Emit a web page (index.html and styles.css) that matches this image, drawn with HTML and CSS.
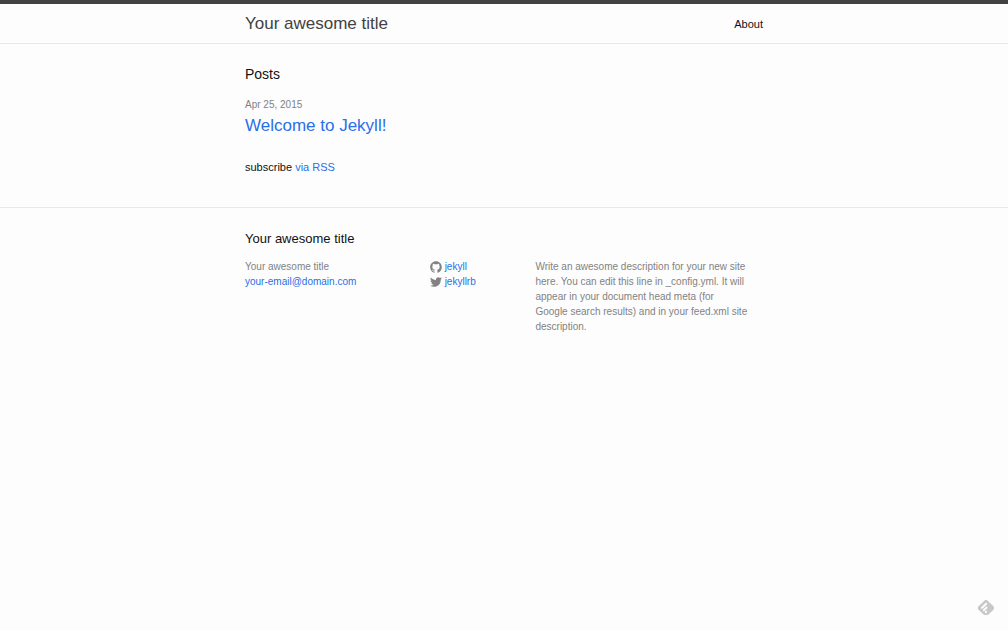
FILE: index.html
```html
<!DOCTYPE html>
<html lang="en">
<head>
<meta charset="utf-8">
<meta name="viewport" content="width=device-width, initial-scale=1">
<title>Your awesome title</title>
<link rel="stylesheet" href="styles.css">
</head>
<body>
<header class="site-header">
  <div class="wrapper header-row">
    <a class="site-title" href="#">Your awesome title</a>
    <nav class="site-nav"><a href="#">About</a></nav>
  </div>
</header>
<main class="page-content">
  <div class="wrapper">
    <h1 class="page-heading">Posts</h1>
    <ul class="post-list">
      <li>
        <time class="post-meta" datetime="2015-04-25">Apr 25, 2015</time>
        <h2 class="post-title"><a href="#">Welcome to Jekyll!</a></h2>
      </li>
    </ul>
    <p class="rss-subscribe">subscribe <a href="#">via RSS</a></p>
  </div>
</main>
<footer class="site-footer">
  <div class="wrapper">
    <h2 class="footer-heading">Your awesome title</h2>
    <div class="footer-columns">
      <ul class="contact-list">
        <li>Your awesome title</li>
        <li><a href="mailto:your-email@domain.com">your-email@domain.com</a></li>
      </ul>
      <ul class="social-list">
        <li><a href="#"><svg class="icon" viewBox="0 0 16 16" aria-hidden="true"><path d="M7.999,0.431c-4.285,0-7.76,3.474-7.76,7.761 c0,3.428,2.223,6.337,5.307,7.363c0.388,0.071,0.53-0.168,0.53-0.374c0-0.184-0.007-0.672-0.01-1.32 c-2.159,0.469-2.614-1.04-2.614-1.04c-0.353-0.896-0.862-1.135-0.862-1.135c-0.705-0.481,0.053-0.472,0.053-0.472 c0.779,0.055,1.189,0.8,1.189,0.8c0.692,1.186,1.816,0.843,2.258,0.645c0.071-0.502,0.271-0.843,0.493-1.037 C4.86,11.425,3.049,10.76,3.049,7.786c0-0.847,0.302-1.54,0.799-2.082C3.768,5.507,3.501,4.718,3.924,3.65 c0,0,0.652-0.209,2.134,0.796C6.677,4.273,7.34,4.187,8,4.184c0.659,0.003,1.323,0.089,1.943,0.261 c1.482-1.004,2.132-0.796,2.132-0.796c0.423,1.068,0.157,1.857,0.077,2.054c0.497,0.542,0.798,1.235,0.798,2.082 c0,2.981-1.814,3.637-3.543,3.829c0.279,0.24,0.527,0.713,0.527,1.437c0,1.037-0.01,1.874-0.01,2.129 c0,0.208,0.14,0.449,0.534,0.373c3.081-1.028,5.302-3.935,5.302-7.362C15.76,3.906,12.285,0.431,7.999,0.431z"/></svg>jekyll</a></li>
        <li><a href="#"><svg class="icon" viewBox="0 0 16 16" aria-hidden="true"><path d="M15.969,3.058c-0.586,0.26-1.217,0.436-1.878,0.515c0.675-0.405,1.194-1.045,1.438-1.809c-0.632,0.375-1.332,0.647-2.076,0.793c-0.596-0.636-1.446-1.033-2.387-1.033c-1.806,0-3.27,1.464-3.27,3.27 c0,0.256,0.029,0.506,0.085,0.745C5.163,5.404,2.753,4.102,1.14,2.124C0.859,2.607,0.698,3.168,0.698,3.767 c0,1.134,0.577,2.135,1.455,2.722C1.616,6.472,1.112,6.325,0.671,6.08c0,0.014,0,0.027,0,0.041c0,1.584,1.127,2.906,2.623,3.206 C3.02,9.402,2.731,9.442,2.433,9.442c-0.211,0-0.416-0.021-0.615-0.059c0.416,1.299,1.624,2.245,3.055,2.271 c-1.119,0.877-2.529,1.4-4.061,1.4c-0.264,0-0.524-0.015-0.78-0.046c1.447,0.928,3.166,1.469,5.013,1.469 c6.015,0,9.304-4.983,9.304-9.304c0-0.142-0.003-0.283-0.009-0.423C14.976,4.29,15.531,3.714,15.969,3.058z"/></svg>jekyllrb</a></li>
      </ul>
      <p class="description">Write an awesome description for your new site here. You can edit this line in _config.yml. It will appear in your document head meta (for<br>Google search results) and in your feed.xml site description.</p>
    </div>
  </div>
</footer>
<button class="feed-button" type="button" aria-label="Subscribe to feed">
  <svg viewBox="0 0 18 18" aria-hidden="true"><path class="feed-shape" d="M7.6 1.4Q9 .2 10.4 1.4L16.7 7.6Q18 9 16.7 10.4L12 15.1Q11.2 16 10 16H8Q6.8 16 6 15.1L1.3 10.4Q0 9 1.3 7.6Z"/><path class="feed-line" d="M5 8.9L9.2 4.7M6.9 11.2L9.5 8.6M8.8 13.1L9.1 12.8"/></svg>
</button>
</body>
</html>
```
FILE: styles.css
```css
* {
  box-sizing: border-box;
  margin: 0;
  padding: 0;
}

body {
  background: #fdfdfd;
  color: #111;
  font: 300 11px/16px "Liberation Sans", Arial, sans-serif;
}

ul {
  list-style: none;
}

h1,
h2 {
  font-weight: 300;
}

a {
  color: #2a6fe8;
  text-decoration: none;
}

a:hover {
  text-decoration: underline;
}

.wrapper {
  max-width: 560px;
  margin: 0 auto;
  padding: 0 21px;
}

.site-header {
  border-top: 4px solid #424242;
  border-bottom: 1px solid #e8e8e8;
}

.header-row {
  display: flex;
  align-items: center;
  justify-content: space-between;
}

.site-title {
  color: #424242;
  font-size: 17px;
  line-height: 39px;
}

.site-nav a {
  color: #111;
}

.page-content {
  padding: 20px 0 32px;
}

.page-heading {
  font-size: 14px;
  line-height: 20px;
}

.post-list {
  margin: 13px 0 20px;
}

.post-meta {
  display: block;
  color: #828282;
  font-size: 10px;
}

.post-title {
  font-size: 17px;
  line-height: 26px;
}

.site-footer {
  padding: 21px 0;
  border-top: 1px solid #e8e8e8;
}

.footer-heading {
  margin-bottom: 10px;
  font-size: 13px;
  line-height: 20px;
}

.footer-columns {
  display: grid;
  grid-template-columns: 185fr 106fr 228fr;
  color: #828282;
  font-size: 10px;
  line-height: 15px;
}

.description {
  padding-right: 10px;
}

.social-list a {
  display: flex;
  align-items: center;
  gap: 3px;
}

.icon {
  width: 12px;
  height: 12px;
  fill: #828282;
}

.feed-button {
  position: fixed;
  right: 13px;
  bottom: 13px;
  width: 18px;
  height: 18px;
  border: 0;
  background: none;
}

.feed-button svg {
  display: block;
}

.feed-shape {
  fill: #c8c8c8;
}

.feed-line {
  fill: none;
  stroke: #fff;
  stroke-width: 2;
  stroke-linecap: round;
}

@media (max-width: 480px) {
  .footer-columns {
    grid-template-columns: 1fr;
    gap: 12px;
  }
}
```
